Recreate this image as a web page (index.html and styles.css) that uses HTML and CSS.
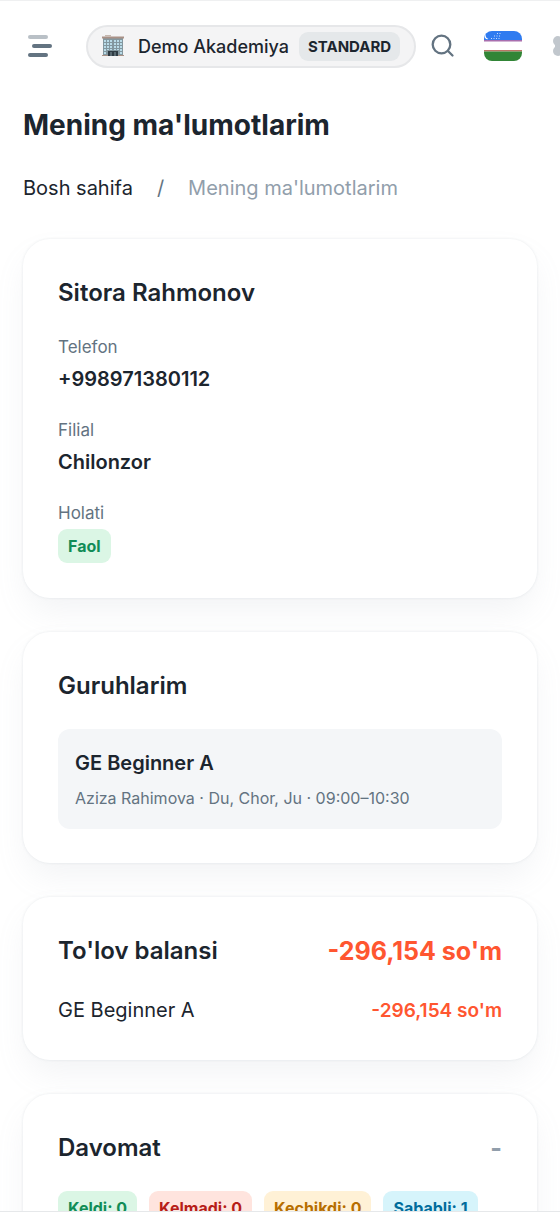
FILE: index.html
```html
<!DOCTYPE html>
<html lang="uz">
<head>
<meta charset="utf-8">
<meta name="viewport" content="width=device-width, initial-scale=1">
<title>Mening ma'lumotlarim</title>
<link rel="stylesheet" href="styles.css">
</head>
<body>
<div class="app">
  <header class="topbar">
    <button class="icon-btn menu-btn" type="button" aria-label="Menyu">
      <svg width="26" height="24" viewBox="0 0 26 24" fill="none" stroke="#637381" stroke-width="4" stroke-linecap="round">
        <path d="M3 3h16" opacity=".45"/><path d="M7 12h16"/><path d="M3 21h16"/>
      </svg>
    </button>
    <button class="workspace" type="button">
      <svg class="building" width="22" height="22" viewBox="0 0 22 22">
        <rect x="1" y="2" width="20" height="19" fill="#83979f"/>
        <path d="M0 1.500h22v2H0z" fill="#a99186"/><path d="M3 0h6v1.500H3z" fill="#c5b7ae"/>
        <g fill="#b9dbe8"><path d="M2 5h2v2H2zM5 5h2v2H5zM8 5h2v2H8zM12 5h2v2h-2zM15 5h2v2h-2zM18 5h2v2h-2zM2 8h2v2H2zM5 8h2v2H5zM8 8h2v2H8zM12 8h2v2h-2zM15 8h2v2h-2zM18 8h2v2h-2zM2 11h2v2H2zM5 11h2v2H5zM8 11h2v2H8zM12 11h2v2h-2zM15 11h2v2h-2zM18 11h2v2h-2zM2 14h2v2H2zM5 14h2v1H5zM8 14h2v1H8zM12 14h2v1h-2zM15 14h2v1h-2zM18 14h2v2h-2zM2 17h2v2H2zM18 17h2v2h-2z"/></g>
        <path d="M6 16h10v5H6z" fill="#2f3b43"/><path d="M9 17v4M13 17v4" stroke="#83979f"/>
        <path d="M0 20h6v1H0zM16 20h6v1h-6z" fill="#a99186"/>
      </svg>
      <span class="workspace-name">Demo Akademiya</span>
      <span class="plan">STANDARD</span>
    </button>
    <button class="icon-btn search-btn" type="button" aria-label="Qidirish">
      <svg width="24" height="24" viewBox="0 0 24 24" fill="none" stroke="#637381" stroke-width="2.300" stroke-linecap="round">
        <circle cx="10.500" cy="10.500" r="8.800"/><path d="M17 17l4.500 4.500"/>
      </svg>
    </button>
    <button class="icon-btn flag-btn" type="button" aria-label="Til">
      <svg class="flag" width="38" height="30" viewBox="0 0 38 30">
        <rect width="38" height="30" fill="#fff"/>
        <rect width="38" height="9" fill="#2f7bf0"/><rect y="9" width="38" height="1.500" fill="#a86fae"/>
        <rect y="19" width="38" height="1.500" fill="#bb7565"/><rect y="20.500" width="38" height="9.500" fill="#318536"/>
        <path d="M1.500 3.500Q1.500 7 4.500 8Q.5 9 .3 4z" fill="#fff"/>
        <path d="M13 2.500h4M10 5h7M7 7.500h10" stroke="#c7dcff" stroke-width="1" stroke-dasharray="1 1.500"/>
      </svg>
    </button>
    <button class="icon-btn settings-btn" type="button" aria-label="Sozlamalar">
      <svg width="24" height="24" viewBox="0 0 24 24" fill="#c1c7cd">
        <circle cx="7" cy="7" r="5"/><circle cx="17" cy="7" r="5"/><circle cx="7" cy="17" r="5"/><circle cx="17" cy="17" r="5"/><rect x="4" y="6" width="16" height="12"/>
      </svg>
    </button>
  </header>

  <main class="content">
    <h1 class="page-title">Mening ma'lumotlarim</h1>
    <nav class="crumbs" aria-label="Yo'l">
      <a class="crumb-link" href="#">Bosh sahifa</a>
      <span class="crumb-sep">/</span>
      <span class="crumb-current">Mening ma'lumotlarim</span>
    </nav>

    <div class="cards">
      <section class="card profile">
        <h2 class="card-title">Sitora Rahmonov</h2>
        <dl class="fields">
          <div class="field"><dt class="label">Telefon</dt><dd class="value">+998971380112</dd></div>
          <div class="field"><dt class="label">Filial</dt><dd class="value">Chilonzor</dd></div>
          <div class="field"><dt class="label">Holati</dt><dd class="badge green">Faol</dd></div>
        </dl>
      </section>

      <section class="card">
        <h2 class="card-title">Guruhlarim</h2>
        <div class="group">
          <span class="value">GE Beginner A</span>
          <span class="note">Aziza Rahimova · Du, Chor, Ju · 09:00–10:30</span>
        </div>
      </section>

      <section class="card">
        <div class="row">
          <h2 class="card-title">To'lov balansi</h2>
          <span class="total debt">-296,154 so'm</span>
        </div>
        <div class="row">
          <span class="item">GE Beginner A</span>
          <span class="amount debt">-296,154 so'm</span>
        </div>
      </section>

      <section class="card">
        <div class="row">
          <h2 class="card-title">Davomat</h2>
          <span class="total muted">-</span>
        </div>
        <div class="badges">
          <span class="badge green">Keldi: 0</span>
          <span class="badge red">Kelmadi: 0</span>
          <span class="badge amber">Kechikdi: 0</span>
          <span class="badge blue">Sababli: 1</span>
        </div>
      </section>
    </div>
  </main>
</div>
</body>
</html>
```
FILE: styles.css
```css
* { box-sizing: border-box; }

body {
  margin: 0;
  background: #fff;
  color: #1c252e;
  font-family: Inter, "Liberation Sans", sans-serif;
  font-size: 20px;
}

h1, h2, dl, dd { margin: 0; }

button {
  margin: 0;
  border: 0;
  background: none;
  color: inherit;
  font: inherit;
  cursor: pointer;
}

.app {
  height: 100vh;
  overflow: hidden;
  border-top: 1px solid #eff0f1;
  border-bottom: 1px solid #e6e8ea;
}

.topbar {
  display: flex;
  align-items: center;
  height: 90px;
  padding-left: 27px;
}

.icon-btn {
  display: flex;
  flex: none;
  padding: 0;
}

.workspace {
  display: flex;
  flex: none;
  align-items: center;
  height: 43px;
  margin-left: 33px;
  padding: 0 14px;
  border: 2px solid #e6e7e9;
  border-radius: 22px;
  background: #f4f4f5;
}

.workspace-name {
  margin: 0 10px 0 14px;
  font-size: 18px;
  font-weight: 500;
}

.plan {
  padding: 0 9px;
  border-radius: 9px;
  background: #e5e8ea;
  font-size: 15px;
  font-weight: 700;
  line-height: 29px;
}

.search-btn { margin-left: 15px; }
.flag-btn { margin-left: 29px; }
.flag { border-radius: 8px; }
.settings-btn { margin-left: 29px; }

.content { padding: 13px 23px; }

.page-title {
  font-size: 28px;
  font-weight: 700;
  line-height: 42px;
}

.crumbs {
  display: flex;
  gap: 24px;
  margin: 26px 0 35px;
  line-height: 32px;
}

.crumb-link { color: inherit; text-decoration: none; }
.crumb-sep { color: #637381; }
.crumb-current { color: #919eab; }

.cards {
  display: flex;
  flex-direction: column;
  gap: 34px;
}

.card {
  display: flex;
  flex-direction: column;
  gap: 24px;
  padding: 35px 35px 34px;
  border-radius: 27px;
  background: #fff;
  box-shadow: 0 0 3px rgba(145, 158, 171, .2), 0 16px 32px -4px rgba(145, 158, 171, .12);
}

.profile {
  gap: 22px;
  padding-bottom: 35px;
}

.card-title {
  font-size: 24px;
  font-weight: 600;
  line-height: 38px;
}

.fields {
  display: flex;
  flex-direction: column;
  gap: 22px;
}

.field {
  display: flex;
  flex-direction: column;
  align-items: flex-start;
  gap: 3px;
}

.label,
.note {
  color: #637381;
  line-height: 26px;
}

.label { font-size: 17px; }
.note { font-size: 16px; }

.value {
  font-weight: 600;
  line-height: 32px;
}

.group {
  display: flex;
  flex-direction: column;
  gap: 6px;
  padding: 18px 17px;
  border-radius: 12px;
  background: #f4f6f8;
}

.row {
  display: flex;
  align-items: center;
  justify-content: space-between;
}

.item { line-height: 32px; }
.total { font-size: 25px; font-weight: 700; }
.amount { font-size: 19px; font-weight: 600; }
.debt { color: #ff5630; }
.muted { color: #919eab; }

.badges {
  display: flex;
  flex-wrap: wrap;
  gap: 12px;
}

.badge {
  padding: 0 10px;
  border-radius: 9px;
  font-size: 16px;
  font-weight: 700;
  line-height: 34px;
}

.green { background: #dbf6e5; color: #118d57; }
.red { background: #ffe4de; color: #b71d18; }
.amber { background: #fff1d6; color: #b76e00; }
.blue { background: #d6f4fb; color: #006c9c; }
```
